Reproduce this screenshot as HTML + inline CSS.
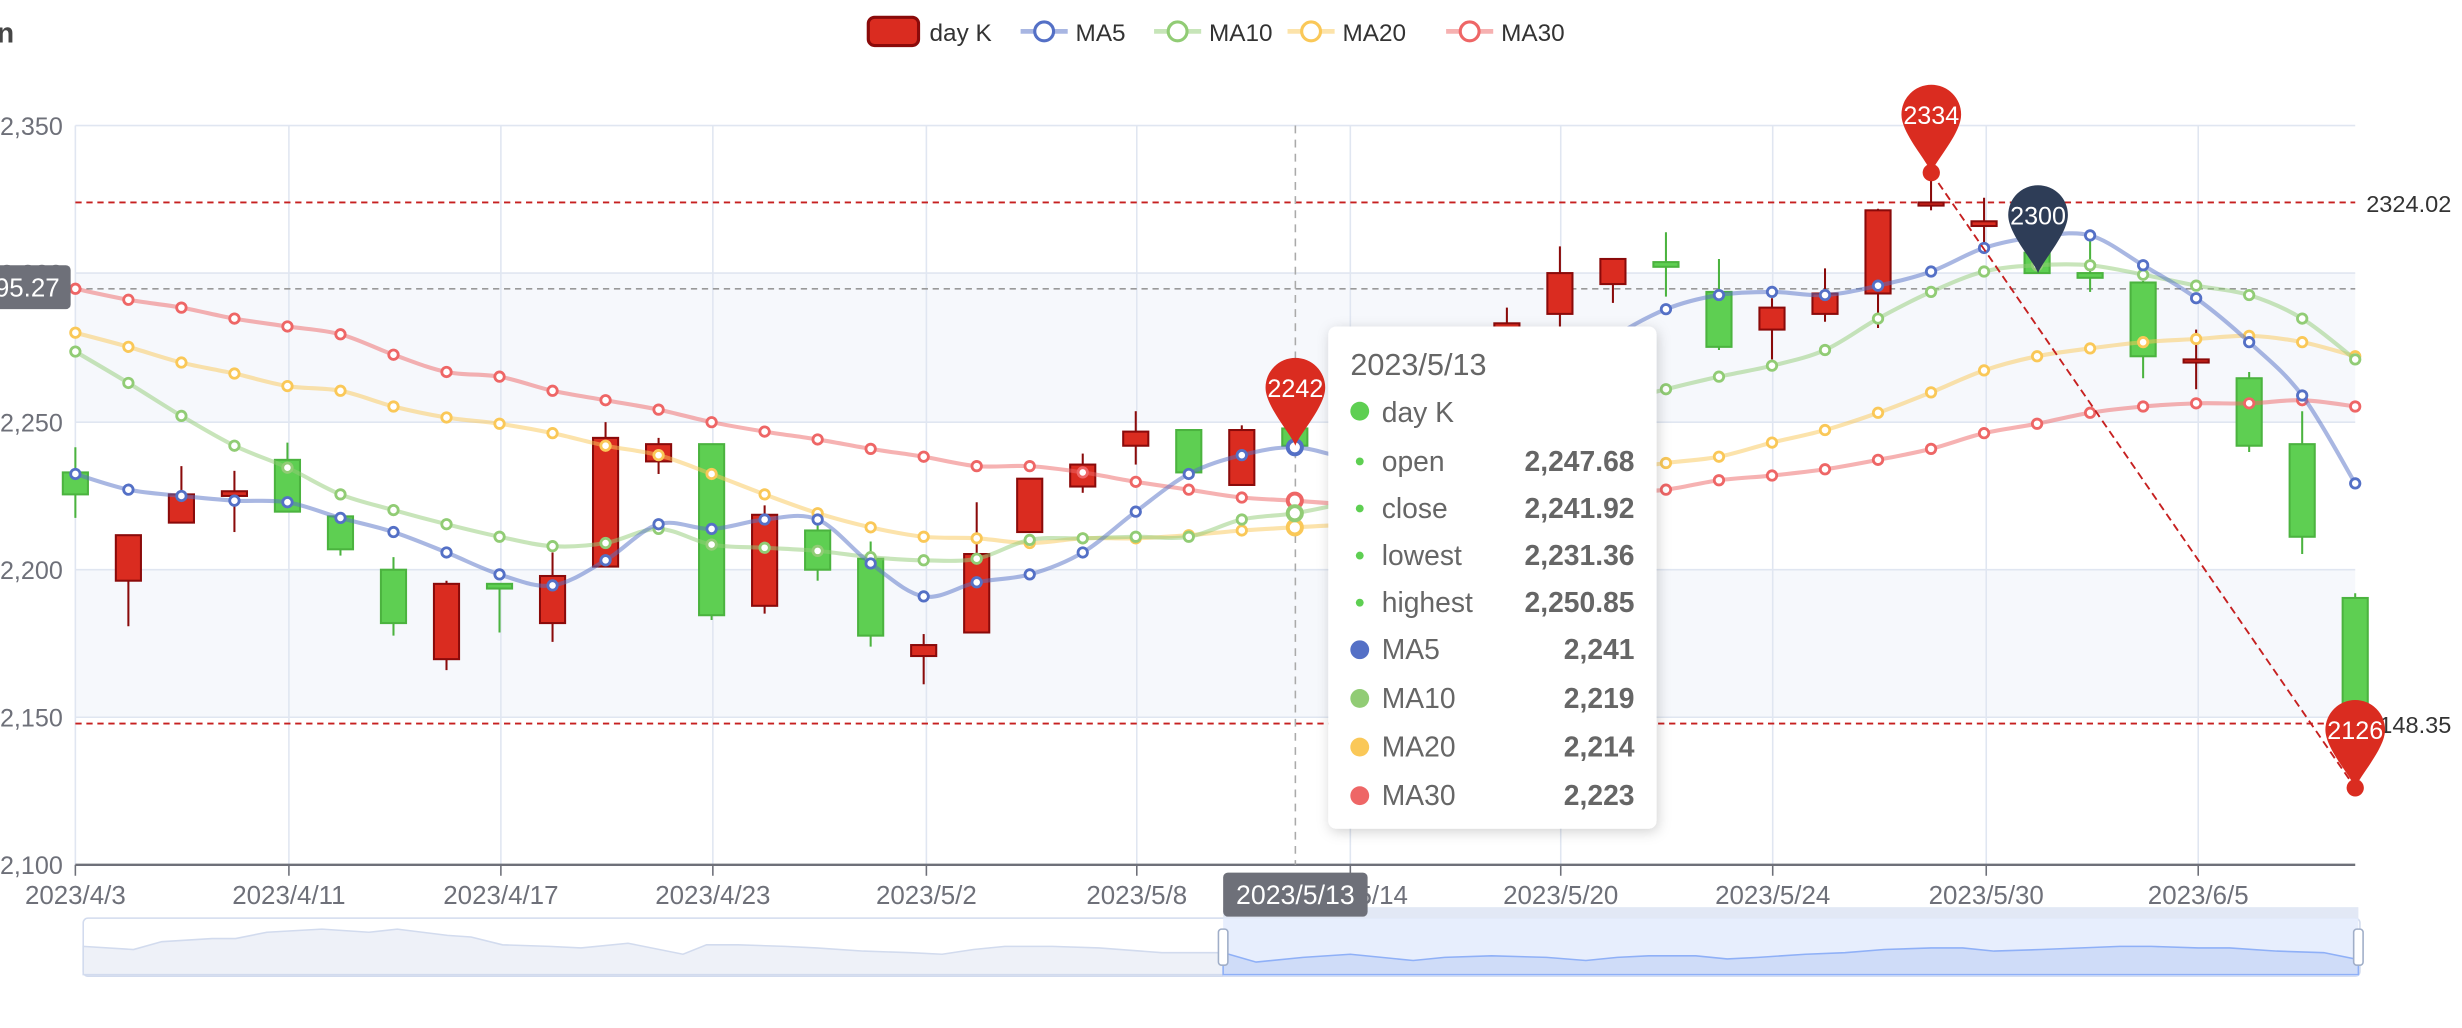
<!DOCTYPE html>
<html><head><meta charset="utf-8"><style>
html,body{margin:0;padding:0;background:#fff;width:2462px;height:1028px;overflow:hidden}
svg{display:block;font-family:"Liberation Sans",sans-serif}
</style></head><body>
<svg id="s" width="2462" height="1028" viewBox="0 0 1568 655" preserveAspectRatio="none">
<defs><filter id="sh" x="-20%" y="-20%" width="140%" height="140%"><feDropShadow dx="1" dy="2" stdDeviation="4" flood-color="#000" flood-opacity="0.18"/></filter></defs>
<text x="-2" y="27" font-size="18" font-weight="bold" fill="#464646">n</text>
<!-- legend -->
<rect x="553" y="11" width="32" height="18" rx="4" fill="#da2c20" stroke="#8a0a0a" stroke-width="2"/>
<text x="592" y="26" font-size="15.5" fill="#333">day K</text>
<line x1="650" y1="20" x2="680" y2="20" stroke="#5470c6" stroke-width="3" opacity="0.5"/><circle cx="665" cy="20" r="6" fill="#fff" stroke="#5470c6" stroke-width="2"/>
<text x="685" y="26" font-size="15.5" fill="#333">MA5</text>
<line x1="735" y1="20" x2="765" y2="20" stroke="#91cc75" stroke-width="3" opacity="0.5"/><circle cx="750" cy="20" r="6" fill="#fff" stroke="#91cc75" stroke-width="2"/>
<text x="770" y="26" font-size="15.5" fill="#333">MA10</text>
<line x1="820" y1="20" x2="850" y2="20" stroke="#fac858" stroke-width="3" opacity="0.5"/><circle cx="835" cy="20" r="6" fill="#fff" stroke="#fac858" stroke-width="2"/>
<text x="855" y="26" font-size="15.5" fill="#333">MA20</text>
<line x1="921" y1="20" x2="951" y2="20" stroke="#ee6666" stroke-width="3" opacity="0.5"/><circle cx="936" cy="20" r="6" fill="#fff" stroke="#ee6666" stroke-width="2"/>
<text x="956" y="26" font-size="15.5" fill="#333">MA30</text>
<!-- bands -->
<rect x="48" y="174" width="1452" height="95" fill="#f6f8fc"/>
<rect x="48" y="363" width="1452" height="94" fill="#f6f8fc"/>
<g id="grid" stroke="#e0e6f1" stroke-width="1"></g>
<g font-size="16" fill="#6e7079" text-anchor="end">
<text x="40" y="86">2,350</text><text x="40" y="180">2,300</text><text x="40" y="275">2,250</text><text x="40" y="369">2,200</text><text x="40" y="463">2,150</text><text x="40" y="557">2,100</text>
</g>
<line x1="48" y1="551" x2="1500" y2="551" stroke="#6e7079" stroke-width="1.5"/>
<g font-size="16.5" fill="#6e7079" text-anchor="middle">
<text x="48" y="576">2023/4/3</text><text x="184" y="576">2023/4/11</text><text x="319" y="576">2023/4/17</text><text x="454" y="576">2023/4/23</text><text x="590" y="576">2023/5/2</text><text x="724" y="576">2023/5/8</text><text x="860" y="576">2023/5/14</text><text x="994" y="576">2023/5/20</text><text x="1129" y="576">2023/5/24</text><text x="1265" y="576">2023/5/30</text><text x="1400" y="576">2023/6/5</text>
</g>
<!-- dashed lines -->
<line x1="48" y1="129" x2="1500" y2="129" stroke="#c62020" stroke-width="1.2" stroke-dasharray="4,3"/>
<line x1="48" y1="461" x2="1500" y2="461" stroke="#c62020" stroke-width="1.2" stroke-dasharray="4,3"/>
<text x="1507" y="135" font-size="15" fill="#333">2324.02</text>
<text x="1507" y="467" font-size="15" fill="#333">2148.35</text>
<line x1="48" y1="184" x2="1500" y2="184" stroke="#999" stroke-width="1" stroke-dasharray="4,3"/>
<line x1="825" y1="80" x2="825" y2="551" stroke="#aaa" stroke-width="1" stroke-dasharray="5,4"/>
<g id="candles"></g>
<g id="lines"></g>
<line x1="1230" y1="110" x2="1500" y2="502" stroke="#c62020" stroke-width="1.2" stroke-dasharray="5,3"/>
<circle cx="1230" cy="110" r="5.5" fill="#da2c20"/>
<circle cx="1500" cy="502" r="5.5" fill="#da2c20"/>
<g id="pins"></g>
<g font-size="16" fill="#fff" text-anchor="middle">
<text x="1230" y="79">2334</text><text x="1298" y="143">2300</text><text x="825" y="253">2242</text><text x="1500" y="471">2126</text>
</g>
<!-- axis pointer labels -->
<rect x="-20" y="169" width="65" height="28" rx="3" fill="#6e7079"/>
<text x="38" y="189" font-size="16.5" fill="#fff" text-anchor="end">2,295.27</text>
<!-- datazoom -->
<rect x="53" y="585" width="1450" height="37" rx="3" fill="#fff" stroke="#d2dbee"/>
<polygon id="dzbg" fill="#eef1f8" stroke="#d2dbee" stroke-width="1"/>
<rect x="779" y="578" width="723" height="7" fill="#e2e8f5"/>
<rect x="779" y="585" width="723" height="37" fill="#e4ecfd" opacity="0.9"/>
<polygon id="dzsel" fill="#cfdcf8" stroke="#8fb0f7" stroke-width="1"/>
<rect x="776" y="592" width="6" height="23" rx="2" fill="#fff" stroke="#a0aec8"/>
<rect x="1499" y="592" width="6" height="23" rx="2" fill="#fff" stroke="#a0aec8"/>
<rect x="779" y="556" width="92" height="28" rx="3" fill="#6e7079"/>
<text x="825" y="576" font-size="17" fill="#fff" text-anchor="middle">2023/5/13</text>
<!-- tooltip -->
<rect x="846" y="208" width="209" height="320" rx="5" fill="#fff" filter="url(#sh)"/>
<g font-size="18" fill="#666">
<text x="860" y="239" font-size="19.5">2023/5/13</text>
<circle cx="866" cy="262" r="6" fill="#5ecf52"/><text x="880" y="269">day K</text>
<circle cx="866" cy="294" r="2.5" fill="#5ecf52"/><text x="880" y="300">open</text><text x="1041" y="300" text-anchor="end" font-weight="bold">2,247.68</text>
<circle cx="866" cy="324" r="2.5" fill="#5ecf52"/><text x="880" y="330">close</text><text x="1041" y="330" text-anchor="end" font-weight="bold">2,241.92</text>
<circle cx="866" cy="354" r="2.5" fill="#5ecf52"/><text x="880" y="360">lowest</text><text x="1041" y="360" text-anchor="end" font-weight="bold">2,231.36</text>
<circle cx="866" cy="384" r="2.5" fill="#5ecf52"/><text x="880" y="390">highest</text><text x="1041" y="390" text-anchor="end" font-weight="bold">2,250.85</text>
<circle cx="866" cy="414" r="6" fill="#5470c6"/><text x="880" y="420">MA5</text><text x="1041" y="420" text-anchor="end" font-weight="bold">2,241</text>
<circle cx="866" cy="445" r="6" fill="#91cc75"/><text x="880" y="451">MA10</text><text x="1041" y="451" text-anchor="end" font-weight="bold">2,219</text>
<circle cx="866" cy="476" r="6" fill="#fac858"/><text x="880" y="482">MA20</text><text x="1041" y="482" text-anchor="end" font-weight="bold">2,214</text>
<circle cx="866" cy="507" r="6" fill="#ee6666"/><text x="880" y="513">MA30</text><text x="1041" y="513" text-anchor="end" font-weight="bold">2,223</text>
</g>
</svg>
<script>
var NS="http://www.w3.org/2000/svg";
function el(p,t,a){var e=document.createElementNS(NS,t);for(var k in a)e.setAttribute(k,a[k]);p.appendChild(e);return e;}
var g=document.getElementById('grid');
[80,174,269,363,457].forEach(function(y){el(g,'line',{x1:48,x2:1500,y1:y,y2:y});});
[48,184,319,454,590,724,860,994,1129,1265,1400].forEach(function(x){el(g,'line',{x1:x,x2:x,y1:80,y2:551});
 el(document.getElementById('s'),'line',{x1:x,x2:x,y1:551,y2:558,stroke:'#6e7079'});});
var X=function(i){return 48+i*33.767;};
var C=[[301,315,285,330,'g'],[341,370,341,399,'r'],[315,333,297,333,'r'],[313,316,300,339,'r'],[293,326,282,326,'g'],[329,350,329,354,'g'],[363,397,355,405,'g'],[372,420,370,427,'r'],[372,375,372,403,'g'],[367,397,352,409,'r'],[279,361,269,361,'r'],[283,294,279,302,'r'],[283,392,283,395,'g'],[328,386,322,391,'r'],[338,363,330,370,'g'],[356,405,345,412,'g'],[411,418,404,436,'r'],[353,403,320,403,'r'],[305,339,305,339,'r'],[296,310,289,314,'r'],[275,284,262,296,'r'],[274,301,274,304,'g'],[274,309,271,309,'r'],[273,284,271,290,'g'],[270,290,265,300,'r'],[260,280,255,290,'g'],[230,250,225,260,'r'],[206,210,196,214,'r'],[174,200,157,209,'r'],[165,181,165,193,'r'],[167,170,148,189,'g'],[186,221,165,223,'g'],[196,210,190,229,'r'],[187,200,171,205,'r'],[134,187,133,209,'r'],[129,131,115,134,'r'],[141,144,126,161,'r'],[161,174,150,174,'g'],[174,177,151,186,'g'],[180,227,179,241,'g'],[229,231,210,248,'r'],[241,284,237,288,'g'],[283,342,262,353,'g'],[381,455,378,460,'g']];
var cg=document.getElementById('candles');
C.forEach(function(c,i){var x=X(i);var fill=c[4]=='r'?'#da2c20':'#5ecf52',st=c[4]=='r'?'#8a0a0a':'#4bb33f';
 el(cg,'line',{x1:x,x2:x,y1:c[2],y2:c[3],stroke:st,'stroke-width':1.3});
 el(cg,'rect',{x:x-8,y:c[0],width:16,height:Math.max(2,c[1]-c[0]),fill:fill,stroke:st,'stroke-width':1.3});});
var L={
'#ee6666':[184,191,196,203,208,213,226,237,240,249,255,261,269,275,280,286,291,297,297,301,307,312,317,319,321,319,317,316,315,314,312,306,303,299,293,286,276,270,263,259,257,257,255,259],
'#fac858':[212,221,231,238,246,249,259,266,270,276,284,290,302,315,327,336,342,343,346,343,343,341,338,336,334,330,322,314,306,300,295,291,282,274,263,250,236,227,222,218,216,214,218,227],
'#91cc75':[224,244,265,284,298,315,325,334,342,348,346,337,347,349,351,355,357,356,344,343,342,342,331,327,320,311,300,285,270,257,248,240,233,223,203,186,173,169,169,175,182,188,203,229],
'#5470c6':[302,312,316,319,320,330,339,352,366,373,357,334,337,331,331,359,380,371,366,352,326,302,290,285,292,296,290,270,240,215,197,188,186,188,182,173,158,151,150,169,190,218,252,308]};
var lg=document.getElementById('lines');
function path(v){var p=v.map(function(y,i){return [X(i),y];});var d='M'+p[0];for(var i=0;i<p.length-1;i++){var a=p[i-1]||p[i],b=p[i],c=p[i+1],e=p[i+2]||c;
 d+=' C'+(b[0]+(c[0]-a[0])/6)+','+(b[1]+(c[1]-a[1])/6)+' '+(c[0]-(e[0]-b[0])/6)+','+(c[1]-(e[1]-b[1])/6)+' '+c[0]+','+c[1];}return d;}
Object.keys(L).forEach(function(col){el(lg,'path',{d:path(L[col]),fill:'none',stroke:col,'stroke-width':2.6,opacity:0.5});
 L[col].forEach(function(y,i){var h=i==23;el(lg,'circle',{cx:X(i),cy:y,r:h?4.5:3,fill:'#fff',stroke:col,'stroke-width':h?2.5:1.8});});});
var pg=document.getElementById('pins');
function pin(cx,tip,col){var r=19,cy=tip-37;el(pg,'path',{fill:col,d:'M'+cx+','+tip+' C'+(cx-3)+','+(tip-8)+' '+(cx-r)+','+(cy+12)+' '+(cx-r)+','+cy+' A'+r+','+r+' 0 1 1 '+(cx+r)+','+cy+' C'+(cx+r)+','+(cy+12)+' '+(cx+3)+','+(tip-8)+' '+cx+','+tip+' Z'});}
pin(1230,110,'#da2c20');pin(1298,174,'#2e3d57');pin(825,284,'#da2c20');pin(1500,502,'#da2c20');
var bg=[[53,603],[85,605],[103,600],[135,598],[150,598],[170,594],[205,592],[235,594],[253,592],[285,596],[300,597],[320,602],[350,603],[370,604],[400,601],[435,608],[450,602],[470,602],[500,603],[520,604],[550,606],[580,607],[600,608],[620,605],[640,603],[670,603],[700,604],[740,607],[779,607]];
var sel=[[779,607],[800,613],[830,610],[860,608],[900,612],[920,610],[950,609],[985,610],[1010,612],[1030,610],[1050,609],[1080,609],[1100,611],[1120,610],[1150,608],[1175,607],[1200,605],[1230,604],[1250,604],[1270,606],[1300,605],[1350,603],[1370,603],[1400,604],[1420,604],[1450,606],[1480,607],[1500,611],[1502,613]];
function poly(id,p){document.getElementById(id).setAttribute('points',p.map(function(q){return q.join(',');}).join(' ')+' '+p[p.length-1][0]+',621 '+p[0][0]+',621');}
poly('dzbg',bg);poly('dzsel',sel);
</script>
</body></html>
